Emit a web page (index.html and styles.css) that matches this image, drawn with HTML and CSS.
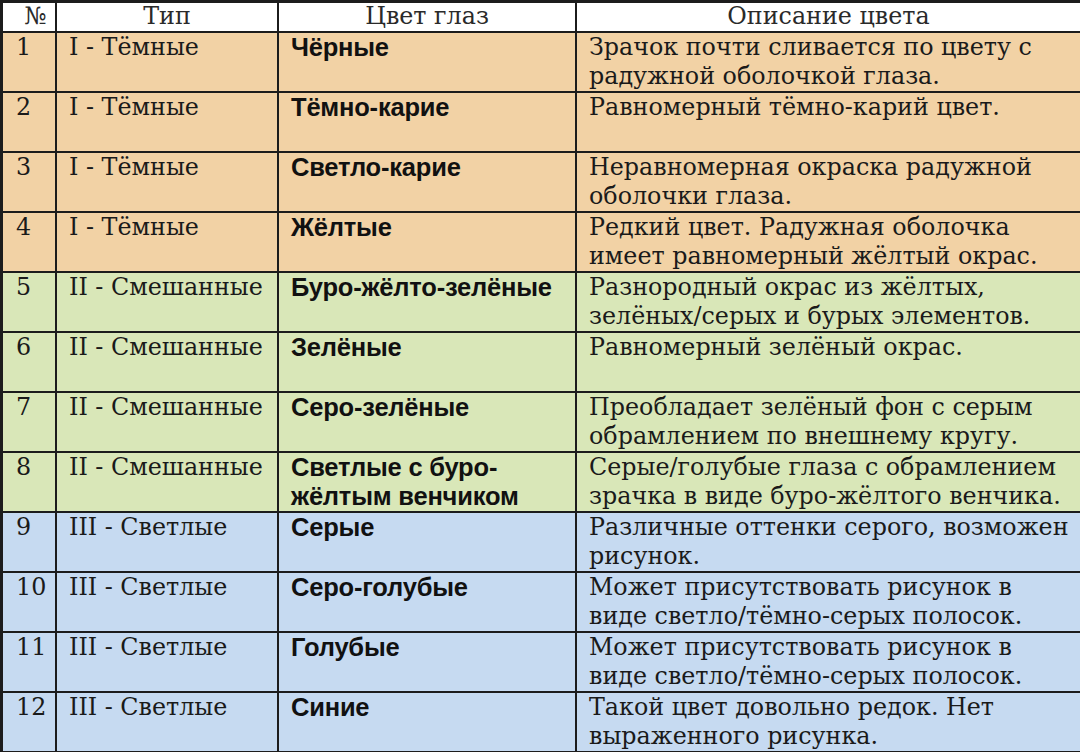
FILE: index.html
```html
<!DOCTYPE html>
<html lang="ru">
<head>
<meta charset="utf-8">
<link rel="stylesheet" href="styles.css">
</head>
<body>
<div class="table">
  <div class="cell head c-num">№</div>
  <div class="cell head">Тип</div>
  <div class="cell head">Цвет глаз</div>
  <div class="cell head">Описание цвета</div>

  <div class="cell dark c-num">1</div><div class="cell dark c-type">I - Тёмные</div><div class="cell dark c-name">Чёрные</div><div class="cell dark c-desc">Зрачок почти сливается по цвету с<br>радужной оболочкой глаза.</div>
  <div class="cell dark c-num">2</div><div class="cell dark c-type">I - Тёмные</div><div class="cell dark c-name">Тёмно-карие</div><div class="cell dark c-desc">Равномерный тёмно-карий цвет.</div>
  <div class="cell dark c-num">3</div><div class="cell dark c-type">I - Тёмные</div><div class="cell dark c-name">Светло-карие</div><div class="cell dark c-desc">Неравномерная окраска радужной<br>оболочки глаза.</div>
  <div class="cell dark c-num">4</div><div class="cell dark c-type">I - Тёмные</div><div class="cell dark c-name">Жёлтые</div><div class="cell dark c-desc">Редкий цвет. Радужная оболочка<br>имеет равномерный жёлтый окрас.</div>

  <div class="cell mixed c-num">5</div><div class="cell mixed c-type">II - Смешанные</div><div class="cell mixed c-name">Буро-жёлто-зелёные</div><div class="cell mixed c-desc">Разнородный окрас из жёлтых,<br>зелёных/серых и бурых элементов.</div>
  <div class="cell mixed c-num">6</div><div class="cell mixed c-type">II - Смешанные</div><div class="cell mixed c-name">Зелёные</div><div class="cell mixed c-desc">Равномерный зелёный окрас.</div>
  <div class="cell mixed c-num">7</div><div class="cell mixed c-type">II - Смешанные</div><div class="cell mixed c-name">Серо-зелёные</div><div class="cell mixed c-desc">Преобладает зелёный фон с серым<br>обрамлением по внешнему кругу.</div>
  <div class="cell mixed c-num">8</div><div class="cell mixed c-type">II - Смешанные</div><div class="cell mixed c-name">Светлые с буро-<br>жёлтым венчиком</div><div class="cell mixed c-desc">Серые/голубые глаза с обрамлением<br>зрачка в виде буро-жёлтого венчика.</div>

  <div class="cell light c-num">9</div><div class="cell light c-type">III - Светлые</div><div class="cell light c-name">Серые</div><div class="cell light c-desc">Различные оттенки серого, возможен<br>рисунок.</div>
  <div class="cell light c-num">10</div><div class="cell light c-type">III - Светлые</div><div class="cell light c-name">Серо-голубые</div><div class="cell light c-desc">Может присутствовать рисунок в<br>виде светло/тёмно-серых полосок.</div>
  <div class="cell light c-num">11</div><div class="cell light c-type">III - Светлые</div><div class="cell light c-name">Голубые</div><div class="cell light c-desc">Может присутствовать рисунок в<br>виде светло/тёмно-серых полосок.</div>
  <div class="cell light c-num">12</div><div class="cell light c-type">III - Светлые</div><div class="cell light c-name">Синие</div><div class="cell light c-desc">Такой цвет довольно редок. Нет<br>выраженного рисунка.</div>
</div>
</body>
</html>
```
FILE: styles.css
```css
html, body {
  margin: 0;
  padding: 0;
  background: #ffffff;
}
.table {
  display: grid;
  grid-template-columns: 52px 220px 296px 503px;
  grid-template-rows: 28px repeat(12, 58px);
  gap: 2px;
  padding: 3px 0 0 3px;
  background: #1c1c1c;
  width: 1080px;
  height: 752px;
  overflow: hidden;
  box-sizing: border-box;
}
.cell {
  font-family: "DejaVu Serif", serif;
  font-size: 23.8px;
  line-height: 29px;
  color: #1a1a1a;
  padding: 0 2px 0 12px;
  overflow: hidden;
  white-space: nowrap;
  letter-spacing: 0;
}
.head {
  background: #ffffff;
  text-align: center;
  padding: 0;
  line-height: 27px;
  color: #2a2a2a;
}
.c-num { padding-left: 13px; }
.c-name {
  font-family: "Liberation Sans", Arial, sans-serif;
  font-weight: bold;
  font-size: 25.5px;
  line-height: 29px;
  color: #111111;
  letter-spacing: -0.2px;
}
.dark { background: #f2d2a5; }
.mixed { background: #d9e7b8; }
.light { background: #c6daf1; }
```
